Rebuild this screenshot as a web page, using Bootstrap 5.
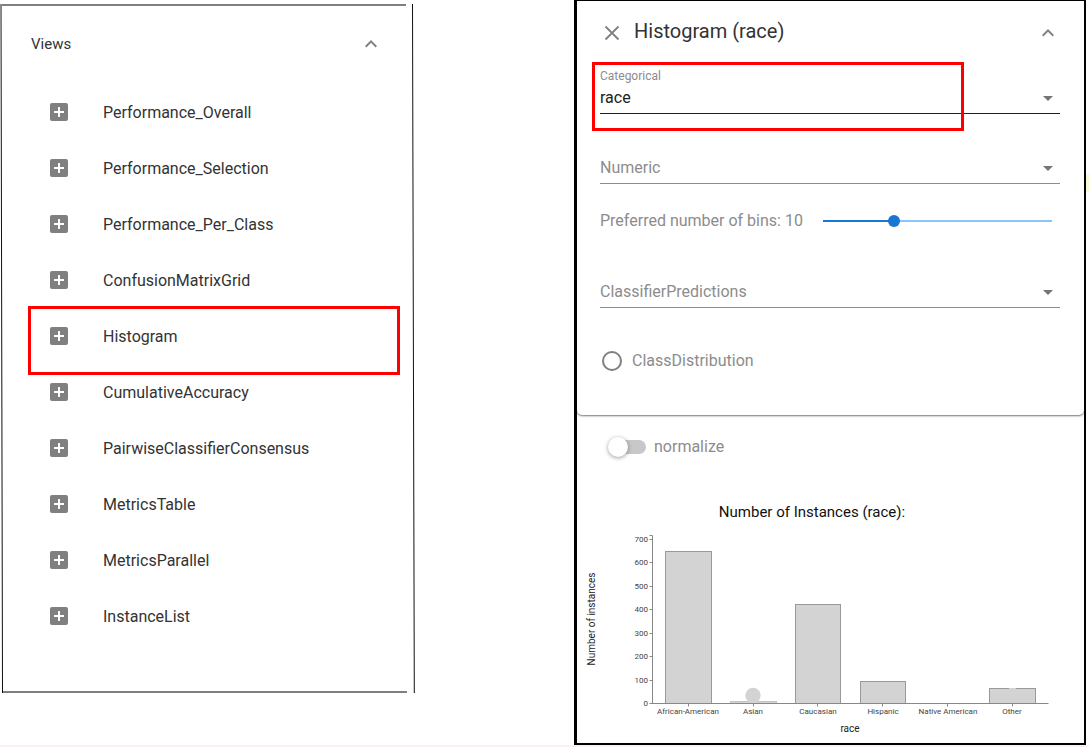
<!DOCTYPE html>
<html lang="en">
<head>
<meta charset="utf-8">
<meta name="viewport" content="width=device-width, initial-scale=1">
<title>Histogram view</title>
<link href="https://cdn.jsdelivr.net/npm/bootstrap@5.3.0/dist/css/bootstrap.min.css" rel="stylesheet">
<style>
  body { font-family: Roboto, "Liberation Sans", sans-serif; font-size: 16px; line-height: 24px; color: #333; background: #fff; }
  .workspace { display: grid; grid-template-columns: 415fr 512fr; column-gap: 159px; align-items: start; padding-right: 3px; border-bottom: 2px solid #fff0f0; }

  /* list of views */
  .views-panel { margin-top: 4px; padding-bottom: 49px; }
  .panel-outline { position: absolute; inset: 0; width: 100%; height: 100%; pointer-events: none; }
  .views-head { height: 80px; padding: 0 32px 0 31px; font-size: 15px; }
  .view-row { height: 56px; padding-left: 47px; gap: 32px; }
  .view-row span { padding-top: 2px; }
  .icon-btn { width: 24px; height: 24px; padding: 0; border: 0; background: none; color: #808080; display: flex; align-items: center; justify-content: center; }
  .marker { position: absolute; border: 3px solid #f00; pointer-events: none; }
  .view-row .marker { inset: -2px 15px -11px 28px; }

  /* histogram window */
  .hist-panel { border: solid #000; border-width: 1px 2px 2px 3px; }
  .edge-note { position: absolute; top: 173px; right: -5px; width: 3px; height: 18px; background: #fafad2; }
  .settings { padding: 18px 24px 42px 23px; border-radius: 0 0 5px 5px; box-shadow: 0 1px 2px rgba(0,0,0,.55); }
  .settings-head { height: 28px; gap: 10px; }
  .settings-head h1 { padding-bottom: 4px; font-size: 20px; line-height: 24px; font-weight: 400; }
  .field { position: relative; }
  .field label { display: block; font-size: 12px; line-height: 14px; color: #8c8c8c; }
  .field select { height: 31px; padding: 0 24px 0 0; border: 0; border-bottom: 1px solid #8c8c8c; border-radius: 0; font-size: 16px; line-height: 24px; color: #8c8c8c;
    background: url("data:image/svg+xml,%3Csvg xmlns='http://www.w3.org/2000/svg' viewBox='0 0 10 5'%3E%3Cpath fill='%23757575' d='M0 0h10L5 5z'/%3E%3C/svg%3E") no-repeat right 7px center / 10px 5px; }
  .field select.chosen { color: #212121; border-bottom-color: #212121; }
  .categorical { margin-top: 22px; }
  .categorical .marker { inset: -7px 96px -17px -8px; }
  .numeric { margin-top: 39px; }
  .bins { margin-top: 25px; gap: 20px; padding-right: 8px; color: #8c8c8c; }
  .bins input { appearance: none; flex: 1; min-width: 0; height: 12px; margin: 0; background: linear-gradient(#1976d2, #1976d2) left center / var(--filled) 2px no-repeat, linear-gradient(#8ac6fc, #8ac6fc) center / 100% 2px no-repeat; }
  .bins input::-webkit-slider-thumb { appearance: none; width: 12px; height: 12px; border-radius: 50%; background: #1976d2; }
  .bins input::-moz-range-thumb { width: 12px; height: 12px; border: 0; border-radius: 50%; background: #1976d2; }
  .predictions { margin-top: 44px; }
  .distribution { margin-top: 41px; padding-left: 2px; gap: 10px; color: #8c8c8c; }
  .distribution input { width: 20px; height: 20px; margin: 0; border: 2px solid #808080; }
  .normalize { padding: 20px 33px 0; gap: 8px; color: #8c8c8c; }
  .toggle { appearance: none; position: relative; width: 36px; height: 14px; margin: 0; border-radius: 7px; background: #c8c8c8; }
  .toggle::before { content: ""; position: absolute; left: -2px; top: -3px; width: 20px; height: 20px; border-radius: 50%; background: #fff; box-shadow: 0 1px 4px rgba(0,0,0,.4); }
  .toggle:checked::before { left: 18px; }
  .chart { width: 100%; margin-top: 31px; }
  .chart .cols { fill: #d3d3d3; stroke: #999; stroke-width: 1; }
  .chart .axis { stroke: #888; fill: none; }
  .chart .ticklabels { font-size: 8px; fill: #444; }
  .chart .heading { font-size: 15px; fill: #111; }
  .chart .axistitle { font-size: 10px; fill: #222; }
</style>
</head>
<body>
<svg class="d-none" aria-hidden="true">
  <symbol id="plus" viewBox="0 0 24 24"><path fill="currentColor" d="M19 3H5a2 2 0 0 0-2 2v14c0 1.100.9 2 2 2h14a2 2 0 0 0 2-2V5a2 2 0 0 0-2-2zm-2 10h-4v4h-2v-4H7v-2h4V7h2v4h4z"/></symbol>
  <symbol id="chevron" viewBox="0 0 24 24"><path fill="currentColor" d="M12 8l-6 6 1.410 1.410L12 10.830l4.590 4.580L18 14z"/></symbol>
  <symbol id="cross" viewBox="0 0 24 24"><path fill="none" stroke="currentColor" stroke-width="1.800" d="M5.500 5.500l13 13M18.500 5.500l-13 13"/></symbol>
</svg>
<main class="workspace">
  <section class="views-panel position-relative" aria-label="Views">
    <svg class="panel-outline" viewBox="0 0 415 689" preserveAspectRatio="none" aria-hidden="true">
      <g fill="none" stroke="#111">
        <path d="M1 0L2.500 689M412.500 0L414.300 689"/>
        <path stroke="#000" d="M2 1H406M2 688H407"/>
      </g>
    </svg>
    <div class="views-head d-flex align-items-center justify-content-between">
      <span>Views</span>
      <button class="icon-btn" type="button" aria-label="Collapse views"><svg width="24" height="24"><use href="#chevron"/></svg></button>
    </div>
    <ul class="list-unstyled mb-0">
      <li class="view-row d-flex align-items-center"><button class="icon-btn" type="button" aria-label="Add Performance_Overall"><svg width="24" height="24"><use href="#plus"/></svg></button><span>Performance_Overall</span></li>
      <li class="view-row d-flex align-items-center"><button class="icon-btn" type="button" aria-label="Add Performance_Selection"><svg width="24" height="24"><use href="#plus"/></svg></button><span>Performance_Selection</span></li>
      <li class="view-row d-flex align-items-center"><button class="icon-btn" type="button" aria-label="Add Performance_Per_Class"><svg width="24" height="24"><use href="#plus"/></svg></button><span>Performance_Per_Class</span></li>
      <li class="view-row d-flex align-items-center"><button class="icon-btn" type="button" aria-label="Add ConfusionMatrixGrid"><svg width="24" height="24"><use href="#plus"/></svg></button><span>ConfusionMatrixGrid</span></li>
      <li class="view-row d-flex align-items-center position-relative"><button class="icon-btn" type="button" aria-label="Add Histogram"><svg width="24" height="24"><use href="#plus"/></svg></button><span>Histogram</span><div class="marker"></div></li>
      <li class="view-row d-flex align-items-center"><button class="icon-btn" type="button" aria-label="Add CumulativeAccuracy"><svg width="24" height="24"><use href="#plus"/></svg></button><span>CumulativeAccuracy</span></li>
      <li class="view-row d-flex align-items-center"><button class="icon-btn" type="button" aria-label="Add PairwiseClassifierConsensus"><svg width="24" height="24"><use href="#plus"/></svg></button><span>PairwiseClassifierConsensus</span></li>
      <li class="view-row d-flex align-items-center"><button class="icon-btn" type="button" aria-label="Add MetricsTable"><svg width="24" height="24"><use href="#plus"/></svg></button><span>MetricsTable</span></li>
      <li class="view-row d-flex align-items-center"><button class="icon-btn" type="button" aria-label="Add MetricsParallel"><svg width="24" height="24"><use href="#plus"/></svg></button><span>MetricsParallel</span></li>
      <li class="view-row d-flex align-items-center"><button class="icon-btn" type="button" aria-label="Add InstanceList"><svg width="24" height="24"><use href="#plus"/></svg></button><span>InstanceList</span></li>
    </ul>
  </section>

  <section class="hist-panel position-relative">
    <div class="edge-note"></div>
    <div class="settings">
      <div class="settings-head d-flex align-items-center">
        <button class="icon-btn" type="button" aria-label="Close"><svg width="24" height="24"><use href="#cross"/></svg></button>
        <h1 class="mb-0 flex-grow-1">Histogram (race)</h1>
        <button class="icon-btn" type="button" aria-label="Collapse settings"><svg width="24" height="24"><use href="#chevron"/></svg></button>
      </div>
      <div class="field categorical">
        <label for="cat">Categorical</label>
        <select id="cat" class="form-select shadow-none chosen"><option>race</option></select>
        <div class="marker"></div>
      </div>
      <div class="field numeric">
        <select class="form-select shadow-none" aria-label="Numeric"><option>Numeric</option></select>
      </div>
      <div class="bins d-flex align-items-center">
        <label for="bins">Preferred number of bins: 10</label>
        <input type="range" id="bins" min="1" max="31" value="10" style="--filled: 30%">
      </div>
      <div class="field predictions">
        <select class="form-select shadow-none" aria-label="ClassifierPredictions"><option>ClassifierPredictions</option></select>
      </div>
      <div class="distribution d-flex align-items-center">
        <input class="form-check-input" type="radio" id="dist">
        <label for="dist">ClassDistribution</label>
      </div>
    </div>
    <div class="normalize d-flex align-items-center">
      <input class="toggle" type="checkbox" role="switch" id="norm">
      <label for="norm">normalize</label>
    </div>
    <svg class="chart d-block" viewBox="0 0 507 253" role="img" aria-label="Number of Instances by race">
      <text class="heading" x="235" y="27" text-anchor="middle">Number of Instances (race):</text>
      <text class="axistitle" transform="translate(18 129) rotate(-90)" text-anchor="middle">Number of instances</text>
      <g class="cols">
        <rect x="88.500" y="61.500" width="46" height="152"/>
        <rect x="153.500" y="211.500" width="46" height="2" stroke="#c4c4c4"/>
        <rect x="218.500" y="114.500" width="45" height="99"/>
        <rect x="283.500" y="191.500" width="45" height="22"/>
        <rect x="412.500" y="198.500" width="46" height="15"/>
      </g>
      <circle cx="176" cy="205.500" r="7.700" fill="#d3d3d3"/>
      <path d="M432 198.500h7" stroke="#d3d3d3"/>
      <path class="axis" d="M72.500 45.500h3V213.500M72.500 49.500h3m-3 23h3m-3 24h3m-3 23h3m-3 24h3m-3 23h3m-3 24h3M72.500 213.500H471.500M111.500 213.500v3m65-3v3m64-3v3m65-3v3m65-3v3m65-3v3"/>
      <g class="ticklabels" text-anchor="end">
        <text x="71" y="52">700</text><text x="71" y="75">600</text><text x="71" y="99">500</text><text x="71" y="122">400</text>
        <text x="71" y="146">300</text><text x="71" y="169">200</text><text x="71" y="193">100</text><text x="71" y="216">0</text>
      </g>
      <g class="ticklabels" text-anchor="middle">
        <text x="111" y="224">African-American</text><text x="176" y="224">Asian</text><text x="241" y="224">Caucasian</text>
        <text x="306" y="224">Hispanic</text><text x="371" y="224">Native American</text><text x="435" y="224">Other</text>
      </g>
      <text class="axistitle" x="273" y="242" text-anchor="middle">race</text>
    </svg>
  </section>
</main>
<script src="https://cdn.jsdelivr.net/npm/bootstrap@5.3.0/dist/js/bootstrap.bundle.min.js"></script>
</body>
</html>
